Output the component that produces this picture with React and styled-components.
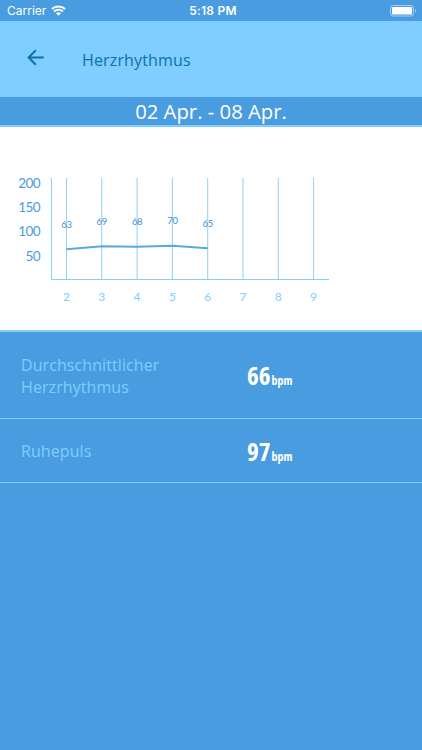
import React from "react";
import styled, { createGlobalStyle } from "styled-components";

const GlobalStyle = createGlobalStyle`
  body {
    margin: 0;
    background-color: #499cdf;
  }
`;

const Screen = styled.div`
  display: flex;
  flex-direction: column;
  height: 750px;
  overflow: hidden;
  background-color: #499cdf;
  font-family: "Open Sans", sans-serif;
`;

const StatusBar = styled.div`
  display: grid;
  grid-template-columns: 1fr auto 1fr;
  align-items: center;
  box-sizing: border-box;
  height: 21px;
  padding: 0 5px 0 7px;
  font-family: Inter, sans-serif;
  font-size: 12px;
  color: #fff;
`;

const Carrier = styled.div`
  display: flex;
  align-items: center;
  gap: 5px;
`;

const Time = styled.div`
  font-weight: 600;
  letter-spacing: 0.2px;
  padding-left: 2px;
`;

const BatteryIcon = styled.svg`
  justify-self: end;
`;

const Header = styled.div`
  display: flex;
  align-items: center;
  box-sizing: border-box;
  height: 76px;
  padding: 0 27px;
  gap: 37px;
  background-color: #80cdff;
  color: #0b73ab;
`;

const BackIcon = styled.svg`
  margin-bottom: 3px;
`;

const Title = styled.div`
  padding-top: 1px;
  font-size: 16px;
  letter-spacing: 0.15px;
`;

const DateBar = styled.div`
  height: 28px;
  line-height: 29px;
  border-bottom: 2px solid #80cdff;
  text-align: center;
  font-size: 20.3px;
  color: #fff;
`;

const ChartBox = styled.div`
  height: 203px;
  border-bottom: 2px solid #80cdff;
  background-color: #fff;
`;

const Chart = styled.svg`
  display: block;
  font-family: Lato, sans-serif;
`;

const Row = styled.div`
  display: flex;
  align-items: center;
  height: ${(props) => props.$height}px;
  padding-left: 21px;
  border-bottom: 1px solid #80cdff;
`;

const Label = styled.div`
  width: 226px;
  padding-top: 1px;
  font-size: 16px;
  line-height: 22px;
  letter-spacing: 0.08px;
  color: #80cdff;
`;

const Value = styled.div`
  font-size: 25px;
  font-weight: 700;
  font-stretch: 75%;
  color: #fff;
`;

const Unit = styled.span`
  font-size: 12px;
  margin-left: 1px;
`;

const DAYS = [2, 3, 4, 5, 6, 7, 8, 9];
const LEVELS = [200, 150, 100, 50];
const RATES = [63, 69, 68, 70, 65];

const dayX = (index) => 66.5 + index * 35.3;
const rateY = (rate) => 122.3 - (rate - 63) * 0.51;

const STATS = [
  { label: "Durchschnittlicher Herzrhythmus", value: 66, height: 86 },
  { label: "Ruhepuls", value: 97, height: 63 },
];

const HeartChart = () => (
  <Chart width="422" height="203" viewBox="0 0 422 203">
    {DAYS.map((day, index) => (
      <g key={day}>
        <path d={`M${dayX(index)} 51V152.5`} stroke="#8fd0fb" />
        <text
          x={dayX(index)}
          y="174.3"
          fontSize="12"
          textAnchor="middle"
          fill="#80cdff"
        >
          {day}
        </text>
      </g>
    ))}
    <path d="M51.4 51V152.5H329" fill="none" stroke="#80cdff" />
    {LEVELS.map((level, index) => (
      <text
        key={level}
        x="40"
        y={60.8 + index * 24.3}
        fontSize="13.5"
        textAnchor="end"
        letterSpacing="-0.6"
        fill="#499cdf"
      >
        {level}
      </text>
    ))}
    <polyline
      points={RATES.map((rate, i) => `${dayX(i)},${rateY(rate)}`).join(" ")}
      fill="none"
      stroke="#57a9df"
      strokeWidth="2"
    />
    {RATES.map((rate, index) => (
      <text
        key={index}
        x={dayX(index)}
        y={rateY(rate) - 21.7}
        fontSize="9.5"
        textAnchor="middle"
        letterSpacing="-0.3"
        fill="#3f8fcf"
      >
        {rate}
      </text>
    ))}
  </Chart>
);

const App = () => {
  return (
    <Screen>
      <GlobalStyle />
      <StatusBar>
        <Carrier>
          Carrier
          <svg width="15" height="11" viewBox="0 0 15 11" fill="none">
            <path
              d="M0.9 4C4.6 0.6 10.4 0.6 14.1 4M3.1 6.4C5.6 4.2 9.4 4.2 11.9 6.4"
              stroke="#fff"
              strokeWidth="2"
            />
            <path d="M5 8.2C6.4 7 8.6 7 10 8.2L7.5 10.7Z" fill="#fff" />
          </svg>
        </Carrier>
        <Time>5:18 PM</Time>
        <BatteryIcon width="27" height="12" viewBox="0 0 27 12" fill="none">
          <rect
            x="0.5"
            y="0.5"
            width="23"
            height="10.5"
            rx="2.5"
            stroke="#a4cdef"
          />
          <rect x="2" y="2" width="20" height="7.5" rx="1" fill="#fff" />
          <path d="M25 4V7.5C26.7 7 26.7 4.5 25 4Z" fill="#a4cdef" />
        </BatteryIcon>
      </StatusBar>
      <Header>
        <BackIcon width="18" height="17" viewBox="0 0 18 17" fill="none">
          <path
            d="M16.8 8.5H2M8.8 1.2L1.6 8.5L8.8 15.8"
            stroke="currentColor"
            strokeWidth="2"
          />
        </BackIcon>
        <Title>Herzrhythmus</Title>
      </Header>
      <DateBar>02 Apr. - 08 Apr.</DateBar>
      <ChartBox>
        <HeartChart />
      </ChartBox>
      {STATS.map((stat) => (
        <Row key={stat.label} $height={stat.height}>
          <Label>{stat.label}</Label>
          <Value>
            {stat.value}
            <Unit>bpm</Unit>
          </Value>
        </Row>
      ))}
    </Screen>
  );
};

export default App;
